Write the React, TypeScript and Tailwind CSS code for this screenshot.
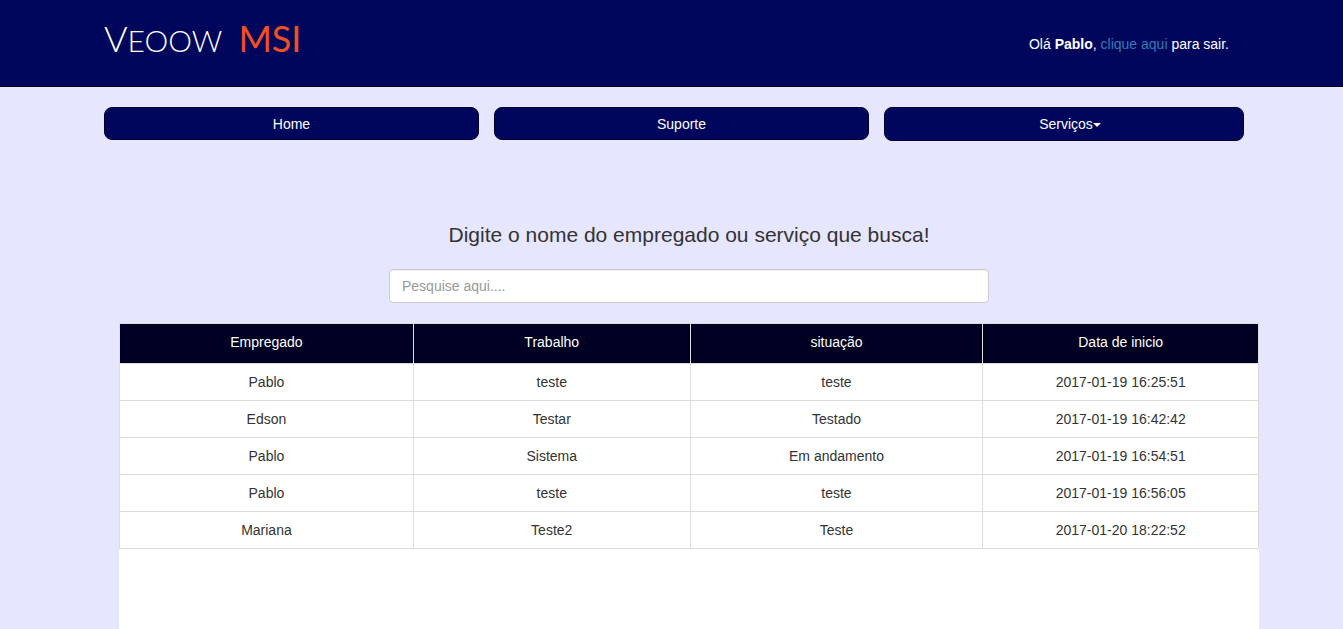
const rows = [
  ['Pablo', 'teste', 'teste', '2017-01-19 16:25:51'],
  ['Edson', 'Testar', 'Testado', '2017-01-19 16:42:42'],
  ['Pablo', 'Sistema', 'Em andamento', '2017-01-19 16:54:51'],
  ['Pablo', 'teste', 'teste', '2017-01-19 16:56:05'],
  ['Mariana', 'Teste2', 'Teste', '2017-01-20 18:22:52'],
];

const columns = [
  { label: 'Empregado', width: 'w-[25.8%]' },
  { label: 'Trabalho', width: 'w-[24.3%]' },
  { label: 'situação', width: 'w-[25.7%]' },
  { label: 'Data de inicio', width: 'w-[24.2%]' },
];

const navButton =
  'block w-full cursor-pointer rounded-lg border border-[#000033] bg-[#00065b] text-center text-white';

function Header() {
  return (
    <header className="border-b border-black bg-[#00065b] pl-[5px] text-white">
      <div className="mx-auto flex h-[86px] max-w-[1170px] items-start justify-between px-[15px]">
        <a
          href="#"
          className="flex items-baseline gap-4 pt-4 font-['Lato',sans-serif] text-[36px] leading-[44px] font-light"
        >
          <span>
            V<span className="text-[30px]">EOOW</span>
          </span>
          <span className="font-normal text-[#f04e23]">MSI</span>
        </a>
        <p className="pt-[34px] pr-[15px]">
          Olá <strong>Pablo</strong>,{' '}
          <a href="#" className="text-[#337ab7]">
            clique aqui
          </a>{' '}
          para sair.
        </p>
      </div>
    </header>
  );
}

function Nav() {
  return (
    <nav className="pt-5 pl-[5px]">
      <div className="mx-auto grid max-w-[1170px] grid-cols-[25fr_25fr_24fr] items-start gap-[15px] px-[15px]">
        <a href="#" className={`${navButton} h-[33px] leading-8`}>
          Home
        </a>
        <a href="#" className={`${navButton} h-[33px] leading-8`}>
          Suporte
        </a>
        <button type="button" className={`${navButton} h-[34px] pl-3 leading-8`}>
          Serviços
          <span className="inline-block border-x-4 border-t-4 border-x-transparent border-t-white align-middle" />
        </button>
      </div>
    </nav>
  );
}

export default function App() {
  return (
    <div className="flex min-h-screen flex-col bg-[#e6e6ff] font-['Liberation_Sans',Arial,sans-serif] text-[14px] leading-5 text-[#333333]">
      <Header />
      <Nav />
      <main className="flex flex-1 flex-col pt-[79px] pl-[5px]">
        <div className="mx-auto flex w-full max-w-[1170px] flex-1 flex-col pl-[30px]">
          <label htmlFor="busca" className="text-center text-[21px] leading-[30px]">
            Digite o nome do empregado ou serviço que busca!
          </label>
          <input
            id="busca"
            type="text"
            placeholder="Pesquise aqui...."
            className="mx-auto mt-[19px] h-[34px] w-full max-w-[600px] rounded border border-[#cccccc] bg-white px-3 shadow-[inset_0_1px_1px_rgba(0,0,0,0.075)] placeholder:text-[#999999]"
          />
          <div className="mt-5 flex-1 bg-white">
            <table className="w-full table-fixed border-collapse text-center">
              <thead>
                <tr className="bg-[#000022] text-white">
                  {columns.map((c) => (
                    <th
                      key={c.label}
                      className={`${c.width} border border-[#dddddd] px-2 pt-2 pb-[11px] font-normal`}
                    >
                      {c.label}
                    </th>
                  ))}
                </tr>
              </thead>
              <tbody>
                {rows.map((row) => (
                  <tr key={row[3]}>
                    {row.map((cell, i) => (
                      <td key={i} className="border border-[#dddddd] p-2">
                        {cell}
                      </td>
                    ))}
                  </tr>
                ))}
              </tbody>
            </table>
          </div>
        </div>
      </main>
    </div>
  );
}
